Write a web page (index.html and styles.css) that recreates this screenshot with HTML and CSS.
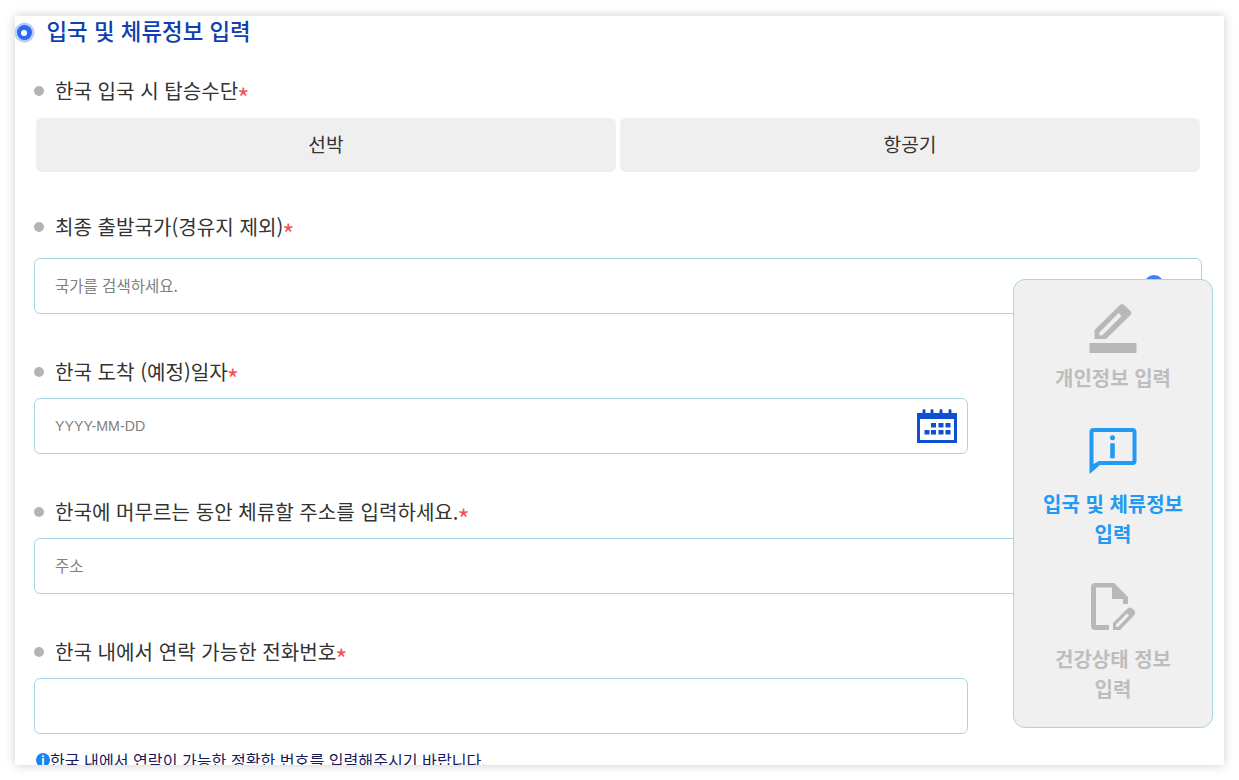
FILE: index.html
```html
<!DOCTYPE html>
<html lang="ko">
<head>
<meta charset="utf-8">
<title>입국 및 체류정보 입력</title>
<link rel="stylesheet" href="styles.css">
</head>
<body>
<main class="card">
  <h2 class="title"><span class="radio"></span>입국 및 체류정보 입력</h2>
  <section class="field first">
    <h3 class="label">한국 입국 시 탑승수단<em>*</em></h3>
    <div class="choices"><button class="choice">선박</button><button class="choice">항공기</button></div>
  </section>
  <section class="field second">
    <h3 class="label">최종 출발국가(경유지 제외)<em>*</em></h3>
    <div class="input full"><span class="ph">국가를 검색하세요.</span><span class="search"></span></div>
  </section>
  <section class="field">
    <h3 class="label">한국 도착 (예정)일자<em>*</em></h3>
    <div class="input"><span class="ph latin">YYYY-MM-DD</span>
      <svg class="cal" width="40" height="35" viewBox="0 0 40 35"><path fill="#0f4fd1" fill-rule="evenodd" d="M0 4h5.500V1.500a1.500 1.500 0 0 1 3 0V4h5V1.500a1.500 1.500 0 0 1 3 0V4h6V1.500a1.500 1.500 0 0 1 3 0V4h6V1.500a1.500 1.500 0 0 1 3 0V4H40v30H0zM3 10v21h34V10z"/><path fill="#0f4fd1" d="M14 14h5v4.500h-5zM21.500 14h5v4.500h-5zM28.500 14h5v4.500h-5zM7.500 21h5v4.500h-5zM14 21h5v4.500h-5zM21.500 21h5v4.500h-5zM28.500 21h5v4.500h-5z"/></svg>
    </div>
  </section>
  <section class="field">
    <h3 class="label">한국에 머무르는 동안 체류할 주소를 입력하세요.<em>*</em></h3>
    <div class="input full"><span class="ph">주소</span></div>
  </section>
  <section class="field">
    <h3 class="label">한국 내에서 연락 가능한 전화번호<em>*</em></h3>
    <div class="input"></div>
    <p class="help"><span class="info">i</span>한국 내에서 연락이 가능한 정확한 번호를 입력해주시기 바랍니다.</p>
  </section>
  <aside class="steps">
    <div class="step">
      <svg width="48" height="52" viewBox="0 0 48 52"><path fill="#b8b8b8" d="M.5 41h47v10H.5z"/><path fill="#b8b8b8" fill-rule="evenodd" d="M5.500 28 31 3q2-2 4 0l6.500 6q2 2 0 4L17 37H5.500zM10 31l.5 2.500H13L32.500 14l-3-3z"/></svg>
      <span>개인정보 입력</span>
    </div>
    <div class="step active">
      <svg width="48" height="46" viewBox="0 0 48 46"><path fill="#2299f3" fill-rule="evenodd" d="M4.500 0h39a4 4 0 0 1 4 4v29a4 4 0 0 1-4 4H11L.5 46V4a4 4 0 0 1 4-4zM4.500 4v32L10 33h33.500V4z"/><circle cx="23.500" cy="9.700" r="2.500" fill="#2299f3"/><path fill="#2299f3" d="M21.200 15.300h4.600v15h-4.600z"/></svg>
      <span>입국 및 체류정보<br>입력</span>
    </div>
    <div class="step">
      <svg width="44" height="48" viewBox="0 0 44 48"><path fill="#b8b8b8" d="M4 0h19l14 14v7h-5v-5H21V4.500H5V42h13v5H4a4 4 0 0 1-4-4V4a4 4 0 0 1 4-4z"/><path fill="#b8b8b8" fill-rule="evenodd" d="M22 47v-7l14-14q3-3 6 0l1 1q3 3 0 5.500L29 47zM25 44h2L38 32.500l-2-2L25 41.500z"/></svg>
      <span>건강상태 정보<br>입력</span>
    </div>
  </aside>
</main>
</body>
</html>
```

FILE: styles.css
```css
* { box-sizing: border-box; }
html, body { margin: 0; height: 780px; overflow: hidden; background: #fff; }
body { padding: 16px 15px 15px; font-family: "Noto Sans CJK KR", "Noto Sans", sans-serif; color: #333; }
.card { position: relative; height: 749px; overflow: hidden; background: #fff; box-shadow: 0 0 10px rgba(0,0,0,.2); padding: 0 24px 0 19px; }
.title { display: flex; align-items: center; gap: 15px; height: 32px; margin: 0 0 0 -19px; padding: 0 0 4px 1.5px; font-size: 22.4px; line-height: 28px; font-weight: 500; color: #0f3fb0; }
.radio { flex: none; position: relative; width: 15px; height: 15px; margin-top: 5px; border-radius: 50%; background: #2e68f0; box-shadow: 0 0 0 2.5px #b8cdfb; }
.radio::after { content: ""; position: absolute; inset: 4.5px; border-radius: 50%; background: #fff; }
.field { margin-top: 41px; }
.field.first { margin-top: 26px; }
.field.second { margin-top: 38px; }
.label { position: relative; margin: 0 0 9px; padding-left: 21px; height: 34px; line-height: 34px; font-size: 20.1px; font-weight: 400; color: #333; }
.label::before { content: ""; position: absolute; left: 0; top: 12px; width: 10px; height: 10px; border-radius: 50%; background: #b4b4b4; }
.label em { display: inline-block; margin-left: -1px; font-size: 26px; line-height: 1; font-style: normal; color: #f5505a; transform: translateY(9px); }
.first .label { margin-bottom: 10px; }
.second .label { margin-bottom: 14px; }
.choices { display: flex; gap: 4px; margin-left: 2px; }
.choice { flex: 1; height: 54px; padding: 0 0 2px; border: 0; border-radius: 6px; background: #efefef; font: 400 19.2px "Noto Sans CJK KR", sans-serif; color: #333; }
.input { display: flex; align-items: center; justify-content: space-between; width: 934px; height: 56px; padding: 0 10px 0 20px; border: 1px solid #a8d4e8; border-radius: 6px; background: #fff; position: relative; }
.input.full { width: 1168px; }
.ph { padding-bottom: 2px; font-size: 15.5px; color: #808080; }
.ph.latin { padding-bottom: 0; font-family: "Liberation Sans", sans-serif; font-size: 14.2px; }
.search { position: absolute; right: 37px; top: 16px; width: 20px; height: 20px; border-radius: 50%; background: #3d82f5; }
.help { display: flex; align-items: center; margin: 14px 0 0 2px; font-size: 16.1px; line-height: 24px; color: #1a1a5a; }
.info { flex: none; display: inline-flex; align-items: center; justify-content: center; width: 14px; height: 14px; border-radius: 50%; background: #1a85f0; color: #fff; font-size: 11px; font-weight: 700; }
.steps { position: absolute; left: 998px; top: 263px; width: 200px; height: 449px; padding-top: 22px; display: flex; flex-direction: column; align-items: center; background: #f0f0f0; border: 1px solid #a8d4e8; border-radius: 12px; }
.step { display: flex; flex-direction: column; align-items: center; text-align: center; font-size: 20px; line-height: 30px; font-weight: 700; color: #bdbdbd; }
.step svg { display: block; margin-bottom: 9px; }
.step.active { color: #2299f3; margin-top: 35px; }
.step.active svg { margin-bottom: 15px; }
.step:last-child { margin-top: 34px; }
.step:last-child svg { margin-bottom: 13px; }
```
